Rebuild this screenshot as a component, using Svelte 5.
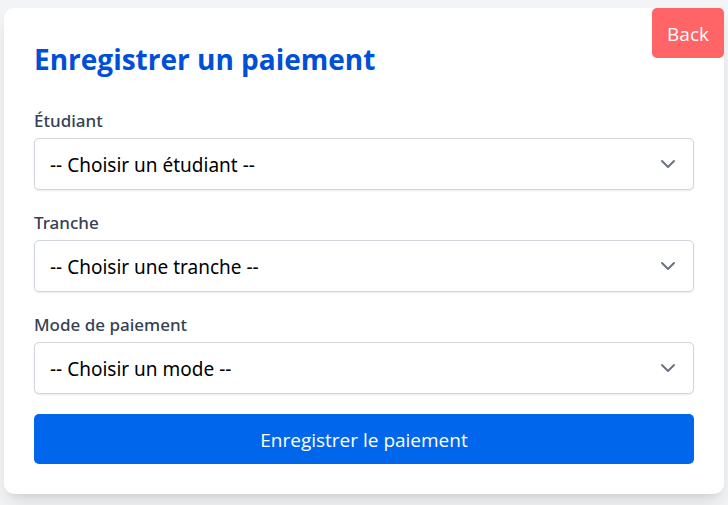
<script>
  const fields = [
    { id: 'etudiant', label: 'Étudiant', placeholder: '-- Choisir un étudiant --' },
    { id: 'tranche', label: 'Tranche', placeholder: '-- Choisir une tranche --' },
    { id: 'mode', label: 'Mode de paiement', placeholder: '-- Choisir un mode --' }
  ];
</script>

<main>
  <section class="card">
    <button type="button" class="back">Back</button>
    <h1>Enregistrer un paiement</h1>
    <form onsubmit={(e) => e.preventDefault()}>
      {#each fields as field}
        <div class="field">
          <label for={field.id}>{field.label}</label>
          <div class="control">
            <select id={field.id}>
              <option value="">{field.placeholder}</option>
            </select>
            <svg viewBox="0 0 20 20" aria-hidden="true"><path d="M4 7l6 6 6-6" /></svg>
          </div>
        </div>
      {/each}
      <button type="submit" class="submit">Enregistrer le paiement</button>
    </form>
  </section>
</main>

<style>
  :global(body) {
    margin: 0;
    background: #f3f4f6;
  }
  main {
    box-sizing: border-box;
    min-height: 100vh;
    padding: 8px 4px 11px;
    font-family: 'Open Sans', 'Noto Sans', sans-serif;
    font-size: 19px;
  }
  .card {
    position: relative;
    padding: 30px;
    border-radius: 10px;
    background: #fff;
    box-shadow: 0 12px 19px -4px rgb(0 0 0 / 0.1), 0 5px 8px -5px rgb(0 0 0 / 0.1);
  }
  .back {
    position: absolute;
    top: 0;
    right: 0;
    padding: 2px 15px 0;
    height: 50px;
    border: 0;
    border-radius: 5px;
    background: #ff6467;
    color: #fff;
    font: inherit;
  }
  h1 {
    margin: 0;
    padding: 1px 0 29px;
    color: #004fd9;
    font-size: 28px;
    font-weight: 700;
    line-height: 40px;
  }
  form {
    display: flex;
    flex-direction: column;
    gap: 20px;
  }
  .field {
    display: flex;
    flex-direction: column;
    gap: 5px;
  }
  label {
    color: #364153;
    font-family: 'Noto Sans', 'Open Sans', sans-serif;
    font-size: 17px;
    font-weight: 500;
    line-height: 25px;
  }
  .control {
    position: relative;
  }
  select {
    display: block;
    box-sizing: border-box;
    width: 100%;
    height: 52px;
    padding: 2px 50px 0 15px;
    border: 1px solid #d1d5dc;
    border-radius: 5px;
    background: #fff;
    box-shadow: 0 1px 2px rgb(0 0 0 / 0.08);
    color: #000;
    font: inherit;
    font-family: 'Noto Sans', 'Open Sans', sans-serif;
    appearance: none;
  }
  svg {
    position: absolute;
    top: 16px;
    right: 16px;
    width: 20px;
    height: 20px;
    fill: none;
    stroke: #6b7280;
    stroke-width: 2;
    stroke-linecap: round;
    stroke-linejoin: round;
    pointer-events: none;
  }
  .submit {
    height: 50px;
    padding: 2px 15px 0;
    border: 0;
    border-radius: 5px;
    background: #0066eb;
    color: #fff;
    font: inherit;
  }
</style>
